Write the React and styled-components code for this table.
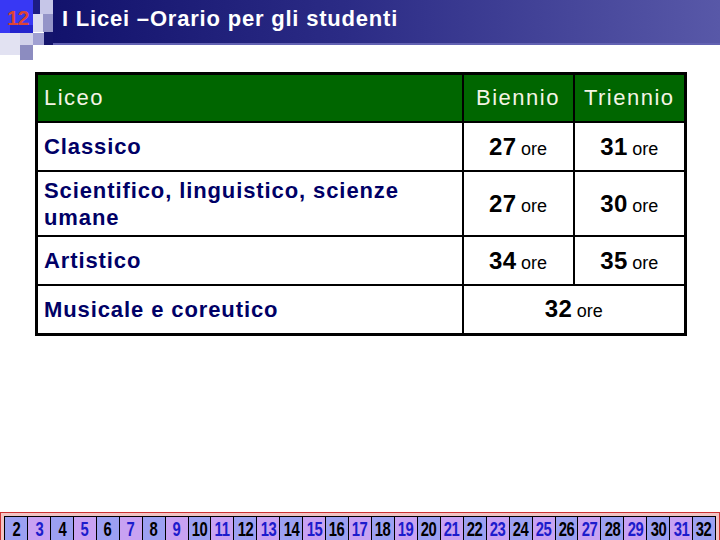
import styled, { createGlobalStyle } from 'styled-components'

const GlobalStyle = createGlobalStyle`
  html, body {
    margin: 0;
    padding: 0;
    background: #ffffff;
    font-family: "Liberation Sans", Arial, sans-serif;
  }
`

const rows = [
  { name: 'Classico', biennio: 27, triennio: 31 },
  { name: 'Scientifico, linguistico, scienze umane', biennio: 27, triennio: 30, tall: true },
  { name: 'Artistico', biennio: 34, triennio: 35 },
  { name: 'Musicale e coreutico', total: 32 },
]

const pages = Array.from({ length: 31 }, (_, i) => i + 2)

export default function App() {
  return (
    <>
      <GlobalStyle />
      <Slide>
        <Header>
          <Corner>
            <svg width="53" height="60" viewBox="0 0 53 60">
              <rect x="0" y="0" width="33" height="33" fill="#3838f4" />
              <rect x="10" y="25" width="23" height="8" fill="#2424cc" />
              <rect x="33" y="0" width="7" height="14" fill="#1c1c84" />
              <rect x="40" y="0" width="13" height="14" fill="#c6c6e8" />
              <rect x="33" y="14" width="10" height="18" fill="#dcdcf0" />
              <rect x="43" y="14" width="10" height="18" fill="#9494c8" />
              <rect x="44" y="32" width="9" height="13" fill="#14146c" />
              <rect x="0" y="33" width="20" height="22" fill="#e2e2f2" />
              <rect x="20" y="33" width="13" height="12" fill="#d2d2ea" />
              <rect x="33" y="33" width="11" height="12" fill="#a0a0d2" />
              <rect x="20" y="45" width="13" height="15" fill="#8c8cc0" />
            </svg>
            <SlideNo>12</SlideNo>
          </Corner>
          <TitleBar>I Licei –Orario per gli studenti</TitleBar>
        </Header>

        <Main>
          <Table>
            <colgroup>
              <col style={{ width: 426 }} />
              <col style={{ width: 111 }} />
              <col style={{ width: 112 }} />
            </colgroup>
            <thead>
              <tr>
                <HeadCell>Liceo</HeadCell>
                <HeadCell $center>Biennio</HeadCell>
                <HeadCell $center>Triennio</HeadCell>
              </tr>
            </thead>
            <tbody>
              {rows.map(row => (
                <Row key={row.name} $tall={row.tall}>
                  <NameCell>{row.name}</NameCell>
                  {row.total ? (
                    <HoursCell colSpan={2}>
                      <Num>{row.total}</Num> <Unit>ore</Unit>
                    </HoursCell>
                  ) : (
                    <>
                      <HoursCell><Num>{row.biennio}</Num> <Unit>ore</Unit></HoursCell>
                      <HoursCell><Num>{row.triennio}</Num> <Unit>ore</Unit></HoursCell>
                    </>
                  )}
                </Row>
              ))}
            </tbody>
          </Table>
        </Main>

        <Footer>
          <PageStrip>
            {pages.map(n => (
              <PageCell key={n} $odd={n % 2 === 1}>
                <PageNum>{n}</PageNum>
              </PageCell>
            ))}
          </PageStrip>
        </Footer>
      </Slide>
    </>
  )
}

const Slide = styled.div`
  width: 720px;
  height: 540px;
  overflow: hidden;
  display: flex;
  flex-direction: column;
`

const Header = styled.header`
  display: flex;
  height: 45px;
  flex-shrink: 0;
`

const Corner = styled.div`
  position: relative;
  width: 53px;
  height: 60px;
  flex-shrink: 0;
  z-index: 1;

  svg {
    display: block;
  }
`

const SlideNo = styled.span`
  position: absolute;
  left: 7px;
  top: 7px;
  font-size: 21px;
  line-height: 21px;
  font-weight: bold;
  letter-spacing: -1px;
  color: #dd4433;
`

const TitleBar = styled.div`
  flex: 1;
  box-sizing: border-box;
  padding: 8px 0 0 9px;
  font-size: 22px;
  line-height: 22px;
  font-weight: bold;
  letter-spacing: 0.8px;
  color: #ffffff;
  background: linear-gradient(to right, #12126c 0%, #2c2c86 45%, #5858a8 100%);
  border-bottom: 2px solid #6262b2;
`

const Main = styled.main`
  padding: 27px 0 0 35px;
`

const Table = styled.table`
  width: 649px;
  border-collapse: collapse;
  table-layout: fixed;
  border: 3px solid #000000;
`

const HeadCell = styled.th`
  height: 46px;
  padding: 0 6px;
  background: #006600;
  color: #f4f4e4;
  font-size: 22px;
  font-weight: normal;
  letter-spacing: 1.5px;
  text-align: ${p => (p.$center ? 'center' : 'left')};
  vertical-align: middle;
  border: 2px solid #000000;
  white-space: nowrap;
`

const Row = styled.tr`
  height: ${p => (p.$tall ? '65px' : '49px')};
`

const NameCell = styled.td`
  padding: 0 6px;
  color: #000066;
  font-size: 22px;
  line-height: 27px;
  font-weight: bold;
  letter-spacing: 0.9px;
  vertical-align: middle;
  border: 2px solid #000000;
`

const HoursCell = styled.td`
  text-align: center;
  vertical-align: middle;
  color: #000000;
  border: 2px solid #000000;
  white-space: nowrap;
`

const Num = styled.span`
  font-size: 24px;
  font-weight: bold;
  letter-spacing: 0.5px;
`

const Unit = styled.span`
  font-size: 18px;
`

const Footer = styled.footer`
  margin-top: auto;
  height: 28px;
  flex-shrink: 0;
  box-sizing: border-box;
  padding: 3px 3px 0 3px;
  background: #f2c4c4;
  border: 1px solid #cc3333;
  border-bottom: none;
`

const PageStrip = styled.div`
  display: flex;
  height: 24px;
  border-top: 1px solid #000000;
  border-left: 1px solid #000000;
`

const PageCell = styled.div`
  flex: 1;
  display: flex;
  justify-content: center;
  align-items: center;
  border-right: 1px solid #000000;
  background: ${p => (p.$odd ? '#c8a2f2' : '#9ca0f2')};
  color: ${p => (p.$odd ? '#1c1ccc' : '#000000')};
`

const PageNum = styled.span`
  display: inline-block;
  font-size: 20px;
  line-height: 22px;
  font-weight: bold;
  letter-spacing: -0.5px;
  transform: scaleX(0.74);
`
